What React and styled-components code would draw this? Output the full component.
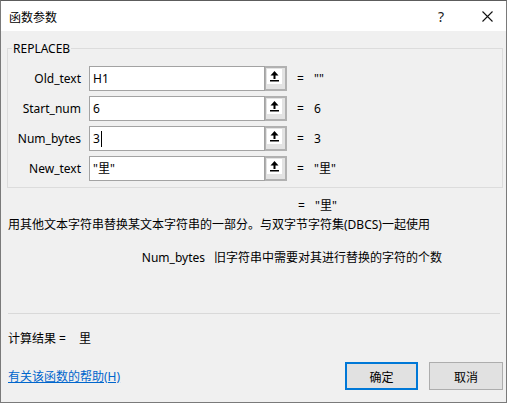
import React from "react";
import styled, { createGlobalStyle } from "styled-components";

const Global = createGlobalStyle`
  body {
    margin: 0;
    background: #ffffff;
    font-family: "Noto Sans", "Noto Sans CJK SC", sans-serif;
    font-size: 12px;
    color: #000;
  }
`;

const rows = [
  { name: "Old_text", value: "H1", result: '""' },
  { name: "Start_num", value: "6", result: "6" },
  { name: "Num_bytes", value: "3", result: "3", caret: true },
  { name: "New_text", value: '"里"', result: '"里"' },
];

function RefIcon() {
  return (
    <svg width="15" height="15" viewBox="0 0 15 15">
      <rect width="15" height="15" fill="#fff" />
      <polygon points="7.5,2 3.5,6.5 11.5,6.5" fill="#000" />
      <rect x="6.5" y="6" width="2" height="4" fill="#000" />
      <rect x="3" y="11" width="9" height="1.5" fill="#000" />
    </svg>
  );
}

function App() {
  return (
    <>
      <Global />
      <Window>
        {/* title bar */}
        <TitleBar>
          <Title>函数参数</Title>
          <TitleButtons>
            <Help>?</Help>
            <Close>
              <svg width="11" height="11" viewBox="0 0 11 11">
                <path d="M0.5 0.5 L10.5 10.5 M10.5 0.5 L0.5 10.5" stroke="#111" strokeWidth="1.1" />
              </svg>
            </Close>
          </TitleButtons>
        </TitleBar>

        <Body>
          <Group>
            <Legend>REPLACEB</Legend>
            <Rows>
              {rows.map((r) => (
                <Row key={r.name}>
                  <ArgLabel>{r.name}</ArgLabel>
                  <Field>
                    {r.value}
                    {r.caret && <Caret />}
                  </Field>
                  <RefButton>
                    <RefIcon />
                  </RefButton>
                  <Eq>=</Eq>
                  <Value>{r.result}</Value>
                </Row>
              ))}
            </Rows>
          </Group>

          <TotalRow>
            <Eq>=</Eq>
            <Value>"里"</Value>
          </TotalRow>

          <Desc>用其他文本字符串替换某文本字符串的一部分。与双字节字符集(DBCS)一起使用</Desc>

          <ArgHelp>
            <ArgHelpName>Num_bytes</ArgHelpName>
            <span>旧字符串中需要对其进行替换的字符的个数</span>
          </ArgHelp>

          <Separator />

          <Result>
            计算结果 = <ResultValue>里</ResultValue>
          </Result>

          <Footer>
            <HelpLink href="#">有关该函数的帮助(H)</HelpLink>
            <Buttons>
              <DialogButton $primary>确定</DialogButton>
              <DialogButton>取消</DialogButton>
            </Buttons>
          </Footer>
        </Body>
      </Window>
    </>
  );
}

const Window = styled.div`
  width: 507px;
  height: 403px;
  box-sizing: border-box;
  border: 1px solid #7a7a7a;
  border-top-color: #5c5c5c;
  background: #f0f0f0;
  display: flex;
  flex-direction: column;
  box-shadow: 0 3px 6px rgba(0, 0, 0, 0.2);
`;

const TitleBar = styled.div`
  height: 30px;
  background: #ffffff;
  display: flex;
  align-items: center;
  justify-content: space-between;
  padding-left: 8px;
`;

const Title = styled.div`
  font-family: "Noto Sans CJK SC", sans-serif;
  font-size: 12px;
  line-height: 17px;
`;

const TitleButtons = styled.div`
  display: flex;
  align-items: center;
`;

const Help = styled.div`
  width: 54px;
  text-align: center;
  font-size: 14px;
  color: #222;
`;

const Close = styled.div`
  width: 38px;
  display: flex;
  justify-content: center;
  align-items: center;
`;

const Body = styled.div`
  flex: 1;
  display: flex;
  flex-direction: column;
  padding: 0 3px 0 6px;
`;

const Group = styled.fieldset`
  margin: 9px 0 0 0;
  padding: 0 0 6px 4px;
  border: 1px solid #dcdcdc;
  min-width: 0;
`;

const Legend = styled.legend`
  padding: 0 1px;
  line-height: 17px;
  color: #000;
`;

const Rows = styled.div`
  display: flex;
  flex-direction: column;
  gap: 5px;
  padding-top: 9px;
`;

const Row = styled.div`
  display: flex;
  align-items: center;
  height: 25px;
`;

const ArgLabel = styled.div`
  width: 69px;
  margin-right: 8px;
  text-align: right;
  line-height: 17px;
`;

const Field = styled.div`
  width: 176px;
  height: 25px;
  box-sizing: border-box;
  border: 1px solid #a3a3a3;
  background: #ffffff;
  padding-left: 3px;
  display: flex;
  align-items: center;
  line-height: 17px;
`;

const Caret = styled.span`
  display: inline-block;
  width: 1px;
  height: 16px;
  background: #000;
  margin-left: 1px;
`;

const RefButton = styled.div`
  width: 22px;
  height: 25px;
  box-sizing: border-box;
  border: 2px solid #b1b1b1;
  border-left-width: 1px;
  background: #e3e3e3;
  padding: 1px 0 0 1px;
  display: flex;
  align-items: flex-start;
`;

const Eq = styled.span`
  margin-left: 10px;
  width: 7px;
  line-height: 17px;
`;

const Value = styled.span`
  margin-left: 10px;
  line-height: 17px;
`;

const TotalRow = styled.div`
  display: flex;
  padding-left: 281px;
  margin-top: 9px;
  line-height: 17px;
`;

const Desc = styled.div`
  padding-left: 1px;
  line-height: 17px;
  margin-top: 2px;
`;

const ArgHelp = styled.div`
  display: flex;
  gap: 9px;
  margin-top: 16px;
  line-height: 17px;
`;

const ArgHelpName = styled.span`
  width: 198px;
  text-align: right;
`;

const Separator = styled.div`
  height: 1px;
  background: #d9d9d9;
  margin: 47px 3px 0 1px;
`;

const Result = styled.div`
  margin-top: 16px;
  padding-left: 1px;
  line-height: 17px;
`;

const ResultValue = styled.span`
  margin-left: 10px;
`;

const Footer = styled.div`
  display: flex;
  align-items: center;
  justify-content: space-between;
  margin-top: 15px;
  padding-left: 1px;
`;

const HelpLink = styled.a`
  color: #0066cc;
  text-decoration: underline;
  line-height: 17px;
`;

const Buttons = styled.div`
  display: flex;
  gap: 11px;
`;

const DialogButton = styled.button`
  width: ${(p) => (p.$primary ? "73px" : "74px")};
  height: 28px;
  box-sizing: border-box;
  background: #e1e1e1;
  border: ${(p) => (p.$primary ? "2px solid #0078d7" : "1px solid #adadad")};
  font-family: "Noto Sans CJK SC", sans-serif;
  font-size: 12px;
  color: #000;
  padding: 0;
`;

export default App;
